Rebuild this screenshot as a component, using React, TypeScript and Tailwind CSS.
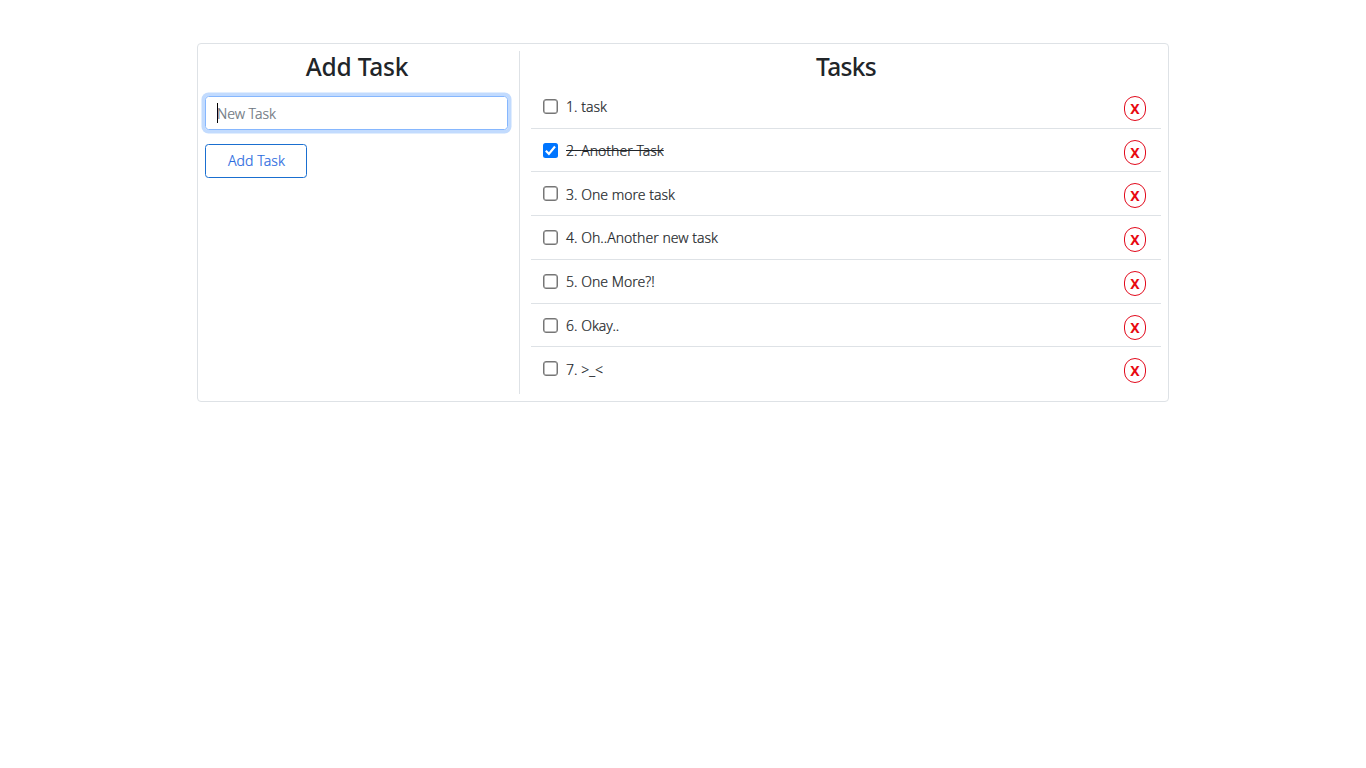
import { useState } from "react";

type Task = { id: number; title: string; done: boolean };

const initialTasks: Task[] = [
  { id: 1, title: "task", done: false },
  { id: 2, title: "Another Task", done: true },
  { id: 3, title: "One more task", done: false },
  { id: 4, title: "Oh..Another new task", done: false },
  { id: 5, title: "One More?!", done: false },
  { id: 6, title: "Okay..", done: false },
  { id: 7, title: ">_<", done: false },
];

function Checkbox({ checked, onClick }: { checked: boolean; onClick: () => void }) {
  return (
    <button
      role="checkbox"
      aria-checked={checked}
      onClick={onClick}
      className={
        checked
          ? "mt-[14px] h-[15px] w-[15px] shrink-0 rounded-[2.5px] bg-[#0075ff]"
          : "mt-[14px] h-[15px] w-[15px] shrink-0 rounded-[3px] border border-[#767676] bg-white shadow-[inset_0_0_0_0.5px_#767676]"
      }
    >
      {checked && (
        <svg viewBox="0 0 16 16" className="block h-[15px] w-[15px]" fill="none" stroke="#fff" strokeWidth="2.3">
          <path d="M3 8.3 6.3 11.6 12.8 3.8" />
        </svg>
      )}
    </button>
  );
}

export default function App() {
  const [tasks, setTasks] = useState(initialTasks);
  const toggle = (id: number) =>
    setTasks(tasks.map((t) => (t.id === id ? { ...t, done: !t.done } : t)));
  const remove = (id: number) => setTasks(tasks.filter((t) => t.id !== id));

  return (
    <main className="flex min-h-screen items-start bg-white pt-[43px] pl-[197px] font-['Noto_Sans',sans-serif] text-[#212529]">
      <div className="flex h-[359px] w-[972px] rounded-[4px] border border-[#dee2e6] p-[7px]">
        <section className="flex w-[315px] flex-col border-r border-[#dee2e6] pr-[11px]">
          <h2 className="h-[45px] text-center text-[24.5px] leading-[31px] font-medium">
            <span className="ml-px tracking-[-0.2px]">Add Task</span>
          </h2>
          <div className="flex h-[34px] items-center rounded-[3.5px] border border-[#86b7fe] pl-[11px] shadow-[0_0_0_3.5px_rgba(13,110,253,0.25)]">
            <span className="h-5 w-px bg-black" />
            <span className="-ml-px text-[14px] leading-[21px] font-light text-[#6c757d] [-webkit-text-stroke:0.2px]">
              New Task
            </span>
          </div>
          <button className="mt-[14px] h-[34px] w-[102px] rounded-[3.5px] border border-[#1a6fd0] pb-px pl-px text-[14px] leading-[21px] font-light tracking-[0.1px] text-[#2a6ae0] [-webkit-text-stroke:0.2px]">
            Add Task
          </button>
        </section>
        <section className="ml-[11px] flex w-[630px] flex-col">
          <h2 className="h-[33.85px] text-center text-[24.5px] leading-[31px] font-medium">
            <span className="tracking-[-0.7px]">Tasks</span>
          </h2>
          <ul>
            {tasks.map((task) => (
              <li
                key={task.id}
                className="flex h-[43.75px] items-start border-b border-[#dee2e6] pr-[15px] pl-[12px] last:border-b-0"
              >
                <Checkbox checked={task.done} onClick={() => toggle(task.id)} />
                <span
                  className={`mt-[11.4px] ml-2 text-[14px] leading-[21px] font-light tracking-[0.02px] [-webkit-text-stroke:0.2px] ${task.done ? "line-through" : ""}`}
                >
                  {task.id}. {task.title}
                </span>
                <button
                  onClick={() => remove(task.id)}
                  className="mt-[11px] ml-auto flex h-[25px] w-[22px] items-center justify-center rounded-[11px] border border-[#e20a1c] pt-px text-[14px] leading-none font-bold text-[#e80a10]"
                >
                  X
                </button>
              </li>
            ))}
          </ul>
        </section>
      </div>
    </main>
  );
}
